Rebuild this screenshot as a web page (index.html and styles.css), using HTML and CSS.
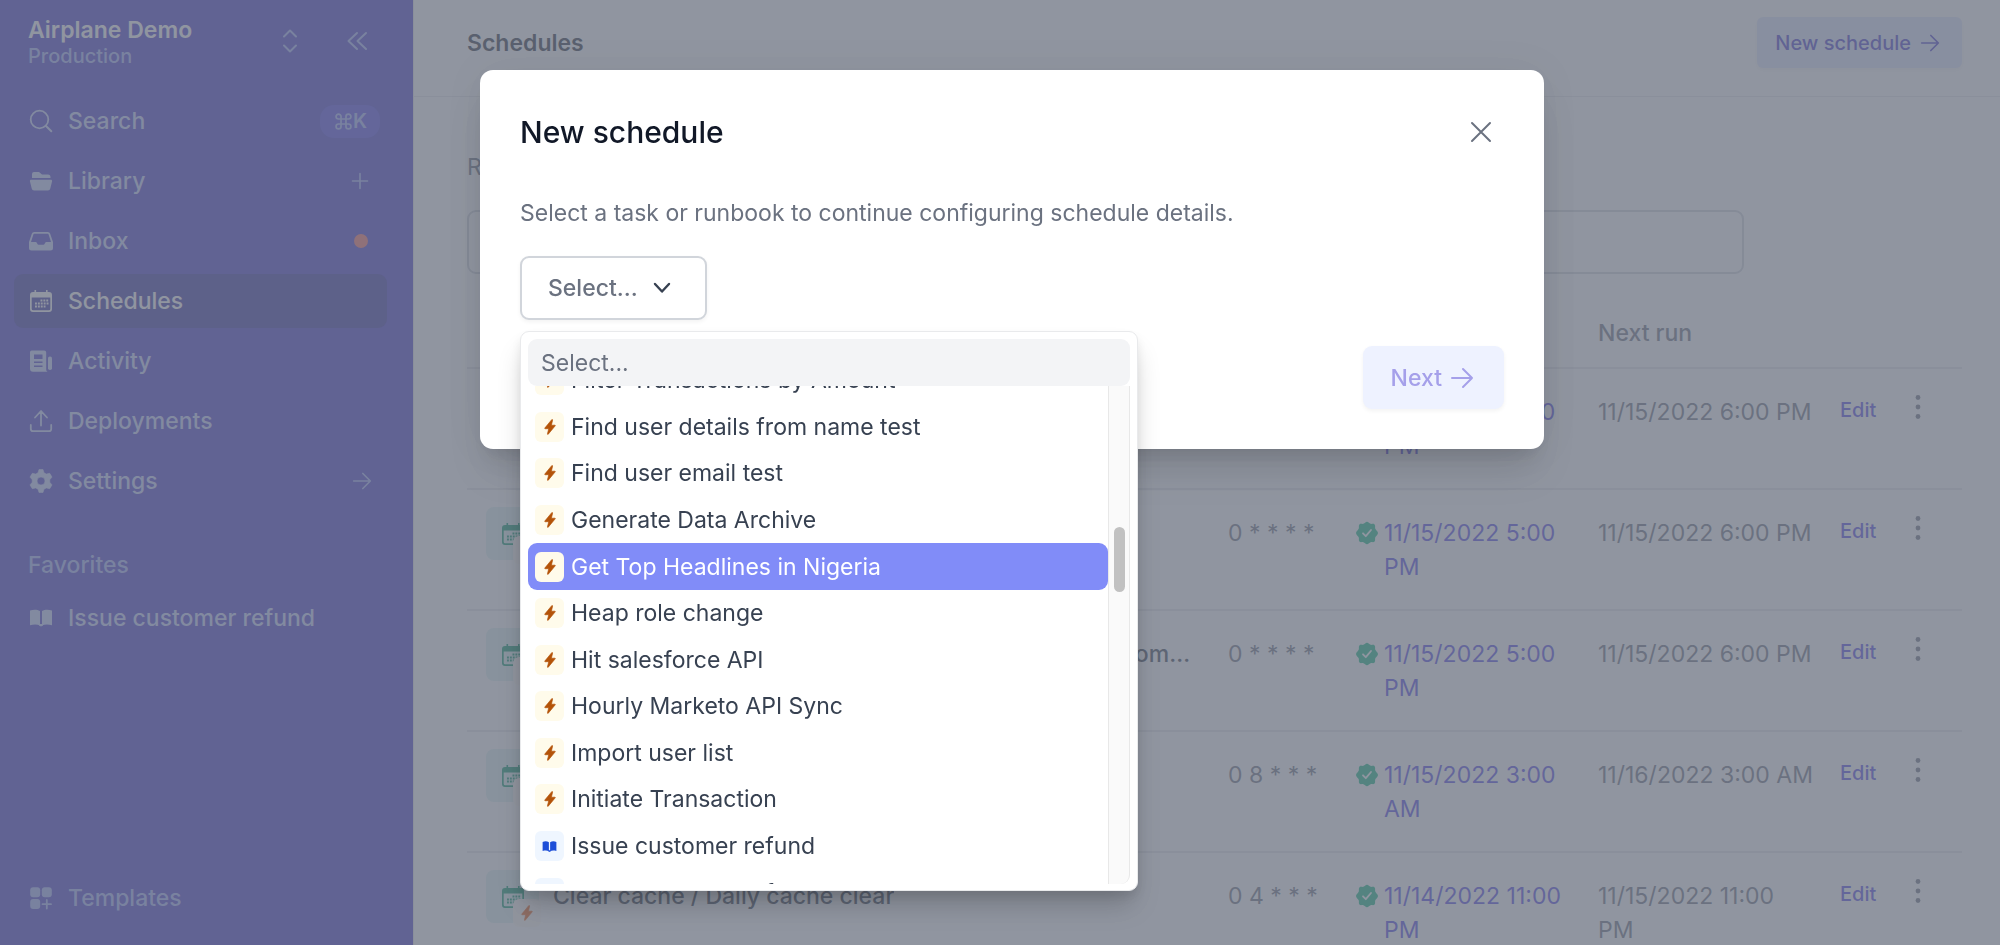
FILE: index.html
```html
<!DOCTYPE html>
<html lang="en">
<head>
<meta charset="utf-8">
<title>Schedules</title>
<link rel="stylesheet" href="styles.css">
</head>
<body>
<svg class="sprite" aria-hidden="true">
  <symbol id="bolt" viewBox="0 0 24 24"><path d="M14.6 1 4.2 13.6c-.3.5-.1 1 .5 1h5.4L8.2 22.2c-.2.9.7 1.2 1.2.5L19.8 10.3c.4-.5.1-1-.5-1h-5.2l1.8-7.6c.2-.9-.7-1.3-1.3-.7Z" fill="currentColor" stroke="currentColor" stroke-width="1"/></symbol>
  <symbol id="book" viewBox="0 0 24 24"><path d="M1 4.600C4.300 3.300 8.200 3.300 11 5v14.500C8 18.200 4.500 18.300 1 19.300ZM13 5c2.800-1.700 6.700-1.700 10-.4v14.700c-3.500-1-7-1.100-10 .2Z" fill="currentColor"/><path d="M10 18h4v1.600l-2 1-2-1Z" fill="currentColor"/></symbol>
  <symbol id="calendar" viewBox="0 0 24 24"><path d="M5.500 1h1.600v2H17V1h1.600v2H20a3 3 0 0 1 3 3v14a3 3 0 0 1-3 3H4a3 3 0 0 1-3-3V6a3 3 0 0 1 3-3h1.500ZM2.700 8.500v11.300a1.500 1.500 0 0 0 1.500 1.500h15.600a1.500 1.500 0 0 0 1.500-1.500V8.500Z" fill="currentColor" fill-rule="evenodd"/><path d="M11.500 11.500h8M6 14.500h13.500M6 17.500h10.500" stroke="currentColor" stroke-width="1.900" stroke-dasharray="1.900 1"/></symbol>
  <symbol id="verified" viewBox="0 0 24 24"><path d="M12 .8c1.500 0 2.300 1.700 3.600 2 1.400.4 2.900-.5 4 .6 1 1.100.2 2.600.6 4 .4 1.300 2.800 2.900 2.800 4.600s-2.400 3.300-2.800 4.600c-.4 1.400.4 2.900-.6 4-1.100 1-2.600.2-4 .6-1.300.3-2.100 2-3.600 2s-2.300-1.700-3.600-2c-1.400-.4-2.900.4-4-.6-1-1.100-.2-2.600-.6-4C3.400 15.300 1 13.700 1 12s2.400-3.300 2.800-4.600c.4-1.400-.4-2.900.6-4 1.100-1.100 2.600-.2 4-.6 1.300-.3 2.100-2 3.600-2Z" fill="currentColor"/><path d="m8 12.300 2.800 2.900L16 9" fill="none" stroke="#fff" stroke-width="1.800" stroke-linecap="round" stroke-linejoin="round"/></symbol>
  <symbol id="arrow" viewBox="0 0 24 24"><path d="M2 12h20M13 3l9 9-9 9" fill="none" stroke="currentColor" stroke-linecap="round" stroke-linejoin="round"/></symbol>
  <symbol id="dots" viewBox="0 0 24 24"><g fill="currentColor"><circle cx="12" cy="2.500" r="2.400"/><circle cx="12" cy="12" r="2.400"/><circle cx="12" cy="21.500" r="2.400"/></g></symbol>
</svg>

<div class="app">
  <aside class="sidebar">
    <div class="team">
      <div class="team-text">
        <div class="team-name">Airplane Demo</div>
        <div class="team-env">Production</div>
      </div>
      <button class="plain" aria-label="Switch team"><svg class="ic24" viewBox="0 0 24 24"><path d="m6 7.500 6-6 6 6M6 16.500l6 6 6-6" fill="none" stroke="currentColor" stroke-width="2" stroke-linecap="round" stroke-linejoin="round"/></svg></button>
      <button class="plain" aria-label="Collapse sidebar"><svg class="ic24" viewBox="0 0 24 24"><path d="m12 4-8.500 8 8.500 8M21 4l-8.500 8 8.500 8" fill="none" stroke="currentColor" stroke-width="2" stroke-linecap="round" stroke-linejoin="round"/></svg></button>
    </div>
    <nav class="nav">
      <a class="item" href="#"><svg class="ic24" viewBox="0 0 24 24"><circle cx="10.500" cy="10.500" r="8.800" fill="none" stroke="currentColor" stroke-width="1.800"/><path d="m17 17 5.300 5.300" stroke="currentColor" stroke-width="2" stroke-linecap="round"/></svg><span>Search</span><kbd class="kbd"><svg class="cmd" viewBox="0 0 24 24"><path d="M8.500 8.500V5a3.500 3.500 0 1 0-3.500 3.500h14A3.500 3.500 0 1 0 15.500 5v14a3.500 3.500 0 1 0 3.500-3.500H5A3.500 3.500 0 1 0 8.500 19Z" fill="none" stroke="currentColor" stroke-width="2.400"/></svg>K</kbd></a>
      <a class="item" href="#"><svg class="ic24" viewBox="0 0 24 24"><path d="M3 9V5a2 2 0 0 1 2-2h5l3 2.500h6A2.500 2.500 0 0 1 21.500 8v1ZM2.200 10.700h19.600c1 0 1.500.7 1.300 1.600l-1.800 7.200A2.500 2.500 0 0 1 18.900 21.500H5.100a2.500 2.500 0 0 1-2.400-2L.9 12.300c-.2-.9.300-1.600 1.300-1.600Z" fill="currentColor"/></svg><span>Library</span><svg class="ic24 end" viewBox="0 0 24 24"><path d="M12 4.500v15M4.500 12h15" stroke="currentColor" stroke-width="1.600" stroke-linecap="round"/></svg></a>
      <a class="item" href="#"><svg class="ic24" viewBox="0 0 24 24"><path d="M5.200 3h13.600a2.500 2.500 0 0 1 2.400 1.800L24 13v6a2.500 2.500 0 0 1-2.500 2.500h-19A2.500 2.500 0 0 1 0 19v-6L2.800 4.800A2.500 2.500 0 0 1 5.200 3Zm0 1.800a.9.900 0 0 0-.8.600L2 13h5c1 0 1 2.700 2.500 2.700h5C16 15.700 16 13 17 13h5l-2.400-7.600a.9.900 0 0 0-.8-.6Z" fill="currentColor" fill-rule="evenodd"/></svg><span>Inbox</span><i class="dot"></i></a>
      <a class="item active" href="#"><svg class="ic24"><use href="#calendar"/></svg><span>Schedules</span></a>
      <a class="item" href="#"><svg class="ic24" viewBox="0 0 24 24"><path d="M3.500 1.500h11.700a2 2 0 0 1 2 2v17c0 1 .7 2 1.600 2.300H4a3 3 0 0 1-3-3V3.500a2 2 0 0 1 2.500-2ZM5 5.500V10h8.500V5.500Zm0 7v1.500h8.500v-1.500Zm0 4V18h8.500v-1.500Z" fill="currentColor" fill-rule="evenodd"/><rect x="19" y="7.500" width="4" height="13.500" rx="1.800" fill="currentColor"/></svg><span>Activity</span></a>
      <a class="item" href="#"><svg class="ic24" viewBox="0 0 24 24"><path d="M12 16.500v-14M6 8.500l6-6.500 6 6.500M1.800 16v4a2.200 2.200 0 0 0 2.200 2.200h16a2.200 2.200 0 0 0 2.200-2.200v-4" fill="none" stroke="currentColor" stroke-width="1.800" stroke-linecap="round" stroke-linejoin="round"/></svg><span>Deployments</span></a>
      <a class="item" href="#"><svg class="ic24" viewBox="0 0 24 24"><path d="M10 .5h4l1 3.300 2.300 1.300 3.400-.8 2.300 3.800-2.200 2.600v2.600l2.200 2.600-2.300 3.800-3.400-.8-2.300 1.300-1 3.300h-4l-1-3.300-2.300-1.300-3.400.8L1 15.900l2.200-2.600v-2.600L1 8.100l2.300-3.800 3.400.8L9 3.800ZM12 8a4 4 0 1 0 0 8 4 4 0 0 0 0-8Z" fill="currentColor" fill-rule="evenodd" stroke="currentColor" stroke-width=".6" stroke-linejoin="round"/></svg><span>Settings</span><svg class="ic20 end arrow"><use href="#arrow"/></svg></a>
    </nav>
    <div class="fav-title">Favorites</div>
    <a class="item" href="#"><svg class="ic24"><use href="#book"/></svg><span>Issue customer refund</span></a>
    <a class="item templates" href="#"><svg class="ic24" viewBox="0 0 24 24"><g fill="currentColor"><rect x="1.200" y="1.200" width="10" height="10" rx="3"/><rect x="12.800" y="1.200" width="10" height="10" rx="3"/><rect x="1.200" y="13" width="10" height="10" rx="3"/></g><path d="M17.800 14v8.500M13.500 18.200H22" stroke="currentColor" stroke-width="1.800" stroke-linecap="round"/></svg><span>Templates</span></a>
  </aside>

  <main class="main">
    <header class="topbar">
      <h1>Schedules</h1>
      <button class="soft small">New schedule<svg class="ic20 arrow"><use href="#arrow"/></svg></button>
    </header>
    <section class="content">
      <label class="filter-label" for="filter">Runbook or task</label>
      <input class="filter" id="filter" type="text">
      <table class="table">
        <colgroup><col><col class="c-cron"><col class="c-last"><col class="c-next"><col class="c-edit"><col class="c-more"></colgroup>
        <thead><tr><th class="th-name">Name</th><th>Schedule</th><th>Last run</th><th>Next run</th><th></th><th></th></tr></thead>
        <tbody>
          <tr><td><div class="name"><span class="cal"><svg class="ic24"><use href="#calendar"/></svg><span class="mini"><svg><use href="#bolt"/></svg></span></span><span class="label">Hourly sync</span></div></td><td>0 * * * *</td><td><a class="run" href="#"><svg class="ic24"><use href="#verified"/></svg><span>11/15/2022 5:00 PM</span></a></td><td>11/15/2022 6:00 PM</td><td><button class="edit">Edit</button></td><td><button class="more" aria-label="More"><svg class="ic24"><use href="#dots"/></svg></button></td></tr>
          <tr><td><div class="name"><span class="cal"><svg class="ic24"><use href="#calendar"/></svg><span class="mini"><svg><use href="#bolt"/></svg></span></span><span class="label">Hourly refresh</span></div></td><td>0 * * * *</td><td><a class="run" href="#"><svg class="ic24"><use href="#verified"/></svg><span>11/15/2022 5:00 PM</span></a></td><td>11/15/2022 6:00 PM</td><td><button class="edit">Edit</button></td><td><button class="more" aria-label="More"><svg class="ic24"><use href="#dots"/></svg></button></td></tr>
          <tr><td><div class="name"><span class="cal"><svg class="ic24"><use href="#calendar"/></svg><span class="mini"><svg><use href="#bolt"/></svg></span></span><span class="label">Hourly Marketo API Sync / Hourly sync of all the customer accounts from the warehouse</span></div></td><td>0 * * * *</td><td><a class="run" href="#"><svg class="ic24"><use href="#verified"/></svg><span>11/15/2022 5:00 PM</span></a></td><td>11/15/2022 6:00 PM</td><td><button class="edit">Edit</button></td><td><button class="more" aria-label="More"><svg class="ic24"><use href="#dots"/></svg></button></td></tr>
          <tr><td><div class="name"><span class="cal"><svg class="ic24"><use href="#calendar"/></svg><span class="mini"><svg><use href="#bolt"/></svg></span></span><span class="label">Daily report</span></div></td><td>0 8 * * *</td><td><a class="run" href="#"><svg class="ic24"><use href="#verified"/></svg><span>11/15/2022 3:00 AM</span></a></td><td>11/16/2022 3:00 AM</td><td><button class="edit">Edit</button></td><td><button class="more" aria-label="More"><svg class="ic24"><use href="#dots"/></svg></button></td></tr>
          <tr><td><div class="name"><span class="cal"><svg class="ic24"><use href="#calendar"/></svg><span class="mini"><svg><use href="#bolt"/></svg></span></span><span class="label">Clear cache / Daily cache clear</span></div></td><td>0 4 * * *</td><td><a class="run" href="#"><svg class="ic24"><use href="#verified"/></svg><span>11/14/2022 11:00 PM</span></a></td><td>11/15/2022 11:00<br>PM</td><td><button class="edit">Edit</button></td><td><button class="more" aria-label="More"><svg class="ic24"><use href="#dots"/></svg></button></td></tr>
        </tbody>
      </table>
    </section>
  </main>
</div>

<div class="overlay">
  <div class="dialog" role="dialog" aria-labelledby="dlg-title">
    <div class="dialog-head">
      <h2 id="dlg-title">New schedule</h2>
      <button class="close" aria-label="Close"><svg class="ic24" viewBox="0 0 24 24"><path d="m3 3 18 18M21 3 3 21" stroke="currentColor" stroke-width="2" stroke-linecap="round"/></svg></button>
    </div>
    <p class="dialog-text">Select a task or runbook to continue configuring schedule details.</p>
    <div class="picker">
      <button class="select-btn" aria-expanded="true">Select...<svg class="ic20" viewBox="0 0 20 20"><path d="m3 6 7 7.500L17 6" fill="none" stroke="currentColor" stroke-width="2.400" stroke-linecap="round" stroke-linejoin="round"/></svg></button>
      <div class="menu">
        <input class="menu-search" type="text" placeholder="Select..." aria-label="Search tasks and runbooks">
        <div class="menu-body">
          <ul class="options" role="listbox">
            <li class="opt" role="option"><span class="tag"><svg><use href="#bolt"/></svg></span>Filter Transactions by Amount</li>
            <li class="opt" role="option"><span class="tag"><svg><use href="#bolt"/></svg></span>Find user details from name test</li>
            <li class="opt" role="option"><span class="tag"><svg><use href="#bolt"/></svg></span>Find user email test</li>
            <li class="opt" role="option"><span class="tag"><svg><use href="#bolt"/></svg></span>Generate Data Archive</li>
            <li class="opt hover" role="option" aria-selected="true"><span class="tag"><svg><use href="#bolt"/></svg></span>Get Top Headlines in Nigeria</li>
            <li class="opt" role="option"><span class="tag"><svg><use href="#bolt"/></svg></span>Heap role change</li>
            <li class="opt" role="option"><span class="tag"><svg><use href="#bolt"/></svg></span>Hit salesforce API</li>
            <li class="opt" role="option"><span class="tag"><svg><use href="#bolt"/></svg></span>Hourly Marketo API Sync</li>
            <li class="opt" role="option"><span class="tag"><svg><use href="#bolt"/></svg></span>Import user list</li>
            <li class="opt" role="option"><span class="tag"><svg><use href="#bolt"/></svg></span>Initiate Transaction</li>
            <li class="opt" role="option"><span class="tag blue"><svg><use href="#book"/></svg></span>Issue customer refund</li>
            <li class="opt" role="option"><span class="tag blue"><svg><use href="#book"/></svg></span>Issue customer refund</li>
          </ul>
          <div class="track"><div class="thumb"></div></div>
        </div>
      </div>
    </div>
    <div class="dialog-foot"><button class="soft next">Next<svg class="ic24 arrow"><use href="#arrow"/></svg></button></div>
  </div>
</div>
</body>
</html>
```

FILE: styles.css
```css
* { box-sizing: border-box; }
body { margin: 0; height: 100vh; overflow: hidden; background: #fff; color: #6b7280; font: 400 23px/34px Inter, "Liberation Sans", sans-serif; }
button, input { font: inherit; color: inherit; margin: 0; }
button { cursor: pointer; }
a { color: inherit; text-decoration: none; }
h1, h2, p, ul { margin: 0; padding: 0; }
svg { display: block; flex: none; }
.sprite { position: absolute; width: 0; height: 0; }
.ic24 { width: 24px; height: 24px; }
.ic20 { width: 20px; height: 20px; }
.arrow { stroke-width: 2px; }

.app { display: flex; height: 100vh; overflow: hidden; }

.sidebar { display: flex; flex-direction: column; flex: none; width: 413px; padding: 15px 26px 20px 14px; background: #4338ca; color: #c7d2fe; }
.team { display: flex; align-items: center; gap: 43px; padding: 0 18px 0 14px; margin-bottom: 27px; color: #a5b4fc; }
.team-text { flex: 1; }
.team-name { color: #fff; font-weight: 600; line-height: 30px; }
.team-env { font-size: 20px; font-weight: 500; line-height: 22px; }
.plain { padding: 0; border: 0; background: none; }
.nav { display: flex; flex-direction: column; gap: 6px; }
.item { display: flex; align-items: center; gap: 15px; height: 54px; padding: 0 15px; border-radius: 9px; font-weight: 500; }
.item.active { background: #3730a3; color: #fff; }
.item .end { margin-left: auto; color: #a5b4fc; }
.kbd { display: flex; align-items: center; gap: 1px; height: 33px; margin: 0 -8px 0 auto; padding: 0 13px 0 15px; border-radius: 14px; background: #4f46e5; color: #a5b4fc; font: 600 20px/33px Inter, sans-serif; }
.cmd { width: 17px; height: 17px; }
.dot { width: 14px; height: 14px; margin: 0 4px 0 auto; border-radius: 50%; background: #f97066; }
.fav-title { margin: 40px 0 9px; padding-left: 14px; color: #a5b4fc; font-weight: 500; line-height: 34px; }
.templates { margin-top: auto; color: #a5b4fc; }

.main { flex: 1; min-width: 0; border-left: 1px solid #e5e7eb; }
.topbar { display: flex; align-items: center; justify-content: space-between; height: 97px; padding: 0 38px 11px 53px; border-bottom: 1px solid #e5e7eb; }
.topbar h1 { color: #111827; font-size: 23px; font-weight: 600; line-height: 34px; opacity: .9; }
.soft { display: flex; align-items: center; border: 0; border-radius: 9px; background: #eef2ff; box-shadow: 0 2px 4px rgba(0, 0, 0, .05); font-weight: 500; }
.small { gap: 9px; height: 51px; padding: 0 22px 0 18px; border-radius: 6px; background: #e0e7ff; color: #4338ca; font-size: 20px; }
.content { padding: 53px 38px 0 53px; }
.filter-label { display: block; line-height: 34px; }
.filter { display: block; width: 1277px; max-width: 100%; height: 64px; margin-top: 26px; padding: 0 20px; border: 2px solid #d1d5db; border-radius: 9px; background: #fff; }
.table { width: 100%; margin-top: 25px; border-collapse: collapse; table-layout: fixed; }
.c-cron { width: 127px; }
.c-last { width: 243px; }
.c-next { width: 242px; }
.c-edit { width: 66px; }
.c-more { width: 56px; }
.table th { height: 69px; padding: 0; text-align: left; font-weight: 500; border-bottom: 2px solid #e5e7eb; }
.table .th-name { padding-left: 20px; }
.table td { height: 121px; padding: 26px 0 0; vertical-align: top; border-bottom: 2px solid #e5e7eb; }
.name { display: flex; align-items: flex-start; gap: 14px; padding: 0 35px 0 19px; color: #374151; font-weight: 500; }
.label { overflow: hidden; text-overflow: ellipsis; white-space: nowrap; }
.cal { display: flex; flex: none; align-items: center; justify-content: center; position: relative; width: 53px; height: 53px; margin-top: -9px; border-radius: 8px; background: #ddf3f2; color: #059669; }
.mini { display: flex; align-items: center; justify-content: center; position: absolute; right: -2px; bottom: -4px; width: 28px; height: 28px; border-radius: 6px; background: #fffbf4; color: #ea580c; }
.mini svg { width: 16px; height: 16px; }
.run { display: flex; align-items: flex-start; gap: 5px; padding-right: 26px; color: #4f46e5; }
.run .ic24 { margin-top: 5px; color: #10b981; }
.edit { display: block; padding: 0; border: 0; background: none; color: #4f46e5; font-size: 20px; font-weight: 500; line-height: 30px; }
.more { display: block; padding: 0; border: 0; background: none; color: #6b7280; }

.overlay { display: flex; align-items: flex-start; justify-content: center; position: fixed; inset: 0; padding: 70px 0 0 24px; background: rgba(107, 114, 128, .75); }
.dialog { width: 1064px; padding: 40px; border-radius: 13px; background: #fff; box-shadow: 0 27px 40px -7px rgba(0, 0, 0, .12), 0 13px 16px -8px rgba(0, 0, 0, .08), 0 0 40px rgba(0, 0, 0, .06); }
.dialog-head { display: flex; align-items: center; justify-content: space-between; height: 44px; padding-right: 11px; }
.dialog h2 { color: #111827; font-size: 30px; font-weight: 500; line-height: 44px; }
.close { padding: 0; border: 0; background: none; }
.dialog-text { margin-top: 42px; line-height: 34px; }
.picker { position: relative; margin-top: 26px; }
.select-btn { display: flex; align-items: center; gap: 14px; height: 64px; padding: 0 33px 0 26px; border: 2px solid #d1d5db; border-radius: 9px; background: #fff; box-shadow: 0 2px 4px rgba(0, 0, 0, .05); font-weight: 500; }
.select-btn svg { color: #374151; }
.menu { position: absolute; top: 75px; left: 0; width: 618px; padding: 7px 7px 6px; border: 1px solid #e9eaec; border-radius: 9px; background: #fff; box-shadow: 0 18px 28px -5px rgba(0, 0, 0, .2), 0 6px 10px rgba(0, 0, 0, .08); }
.menu-search { display: block; width: 100%; height: 47px; padding: 0 13px; border: 0; border-radius: 9px; background: #f3f4f6; }
.menu-search::placeholder { color: #6b7280; opacity: 1; }
.menu-body { display: flex; height: 498px; overflow: hidden; }
.options { display: flex; flex-direction: column; flex: 1; height: 559px; margin-top: -29px; list-style: none; }
.opt { display: flex; flex: 1; align-items: center; gap: 7px; padding: 0 7px; border-radius: 9px; color: #374151; white-space: nowrap; }
.opt.hover { background: #818cf8; color: #fff; }
.tag { display: flex; align-items: center; justify-content: center; width: 29px; height: 30px; border-radius: 6px; background: #fffbeb; color: #b45309; }
.tag svg { width: 16px; height: 16px; }
.tag.blue { background: #eff6ff; color: #1d4ed8; }
.tag.blue svg { width: 15px; height: 15px; }
.track { width: 22px; padding: 141px 4px 0 5px; border: solid #e8e8e8; border-width: 0 1px; background: #fafafa; border-bottom-right-radius: 9px; }
.thumb { height: 65px; border-radius: 6px; background: #c1c1c1; }
.dialog-foot { display: flex; justify-content: flex-end; margin-top: 26px; }
.next { gap: 8px; height: 63px; padding: 0 30px 0 28px; color: #a5a0ea; }
```
